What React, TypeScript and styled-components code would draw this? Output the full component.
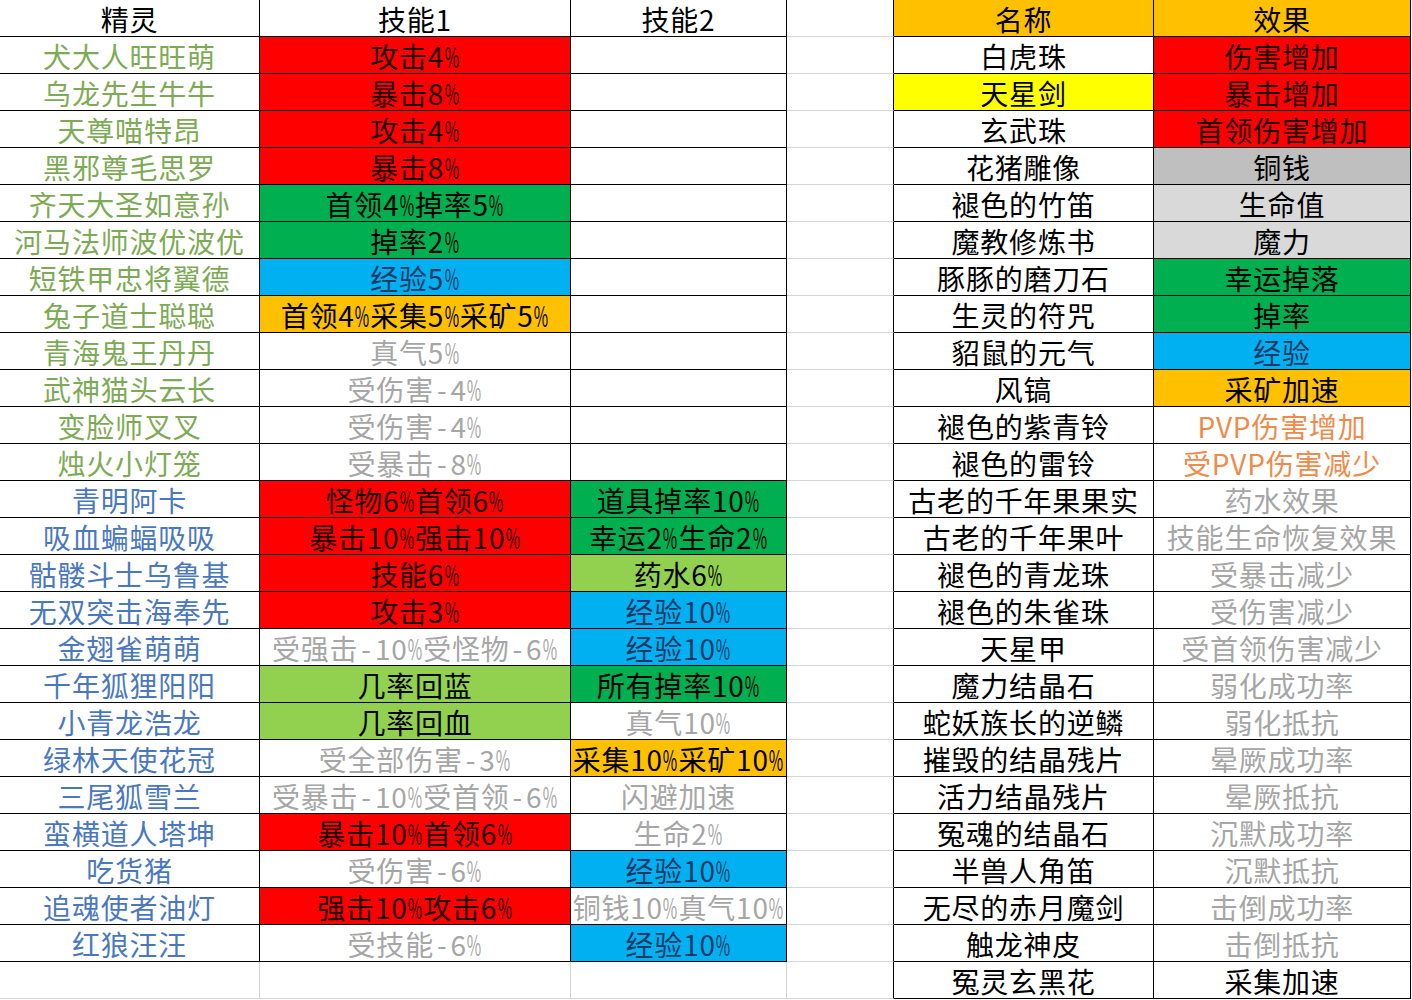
import styled, { createGlobalStyle } from 'styled-components'

const GlobalStyle = createGlobalStyle`
  html, body {
    margin: 0;
    padding: 0;
    background: #fff;
  }
`

const BLACK = '#000'
const GRID = '#d4d4d4'

const RED = '#ff0000'
const GREEN = '#00b050'
const LIME = '#92d050'
const SKY = '#00b0f0'
const AMBER = '#ffc000'
const YELLOW = '#ffff00'
const SILVER = '#bfbfbf'
const PALE = '#d9d9d9'

const DIM = '#a6a6a6'
const LEAF = '#7dab55'
const BLUE = '#4a78c0'
const NAVY = '#1f3864'
const ORANGE = '#f08a4b'

const Sheet = styled.div`
  display: grid;
  grid-template-columns: 260px 311px 216px 107px 260px 257px;
  grid-auto-rows: 37px;
  width: 1411px;
  font-family: 'Noto Sans CJK SC', 'Liberation Sans', sans-serif;
  font-size: 28px;
  letter-spacing: 0.8px;
`

const Cell = styled.div<{ $bg?: string; $color?: string; $right?: string; $bottom?: string }>`
  box-sizing: border-box;
  display: flex;
  align-items: center;
  justify-content: center;
  white-space: nowrap;
  line-height: 36px;
  padding-top: 1px;
  background: ${(p) => p.$bg || '#fff'};
  color: ${(p) => p.$color || '#000'};
  border-right: 1px solid ${(p) => p.$right || BLACK};
  border-bottom: 1px solid ${(p) => p.$bottom || BLACK};
`

/* the sheet's font draws a slim, tall percent sign */
const Pct = styled.span`
  display: inline-block;
  transform: scaleX(0.56);
  margin: 0 -5.5px;
`

const Dash = styled.span`
  margin: 0 3px;
`

const Label = ({ text }: { text?: string }) => {
  if (!text) return null
  return (
    <>
      {text.split(/([%-])/).map((part, i) =>
        part === '%' ? <Pct key={i}>%</Pct> : part === '-' ? <Dash key={i}>-</Dash> : part,
      )}
    </>
  )
}

type Fill = { text?: string; bg?: string; color?: string }

const onColor = (bg?: string) => (bg === SKY ? NAVY : bg === RED ? '#1a0000' : '#000')

const fill = (text: string, bg?: string): Fill => ({ text, bg, color: bg ? onColor(bg) : DIM })

const spirits: [string, string, Fill, Fill][] = [
  ['犬大人旺旺萌', LEAF, fill('攻击4%', RED), {}],
  ['乌龙先生牛牛', LEAF, fill('暴击8%', RED), {}],
  ['天尊喵特昂', LEAF, fill('攻击4%', RED), {}],
  ['黑邪尊毛思罗', LEAF, fill('暴击8%', RED), {}],
  ['齐天大圣如意孙', LEAF, fill('首领4%掉率5%', GREEN), {}],
  ['河马法师波优波优', LEAF, fill('掉率2%', GREEN), {}],
  ['短铁甲忠将翼德', LEAF, fill('经验5%', SKY), {}],
  ['兔子道士聪聪', LEAF, fill('首领4%采集5%采矿5%', AMBER), {}],
  ['青海鬼王丹丹', LEAF, fill('真气5%'), {}],
  ['武神猫头云长', LEAF, fill('受伤害-4%'), {}],
  ['变脸师叉叉', LEAF, fill('受伤害-4%'), {}],
  ['烛火小灯笼', LEAF, fill('受暴击-8%'), {}],
  ['青明阿卡', BLUE, fill('怪物6%首领6%', RED), fill('道具掉率10%', GREEN)],
  ['吸血蝙蝠吸吸', BLUE, fill('暴击10%强击10%', RED), fill('幸运2%生命2%', GREEN)],
  ['骷髅斗士乌鲁基', BLUE, fill('技能6%', RED), fill('药水6%', LIME)],
  ['无双突击海奉先', BLUE, fill('攻击3%', RED), fill('经验10%', SKY)],
  ['金翅雀萌萌', BLUE, fill('受强击-10%受怪物-6%'), fill('经验10%', SKY)],
  ['千年狐狸阳阳', BLUE, fill('几率回蓝', LIME), fill('所有掉率10%', GREEN)],
  ['小青龙浩龙', BLUE, fill('几率回血', LIME), fill('真气10%')],
  ['绿林天使花冠', BLUE, fill('受全部伤害-3%'), fill('采集10%采矿10%', AMBER)],
  ['三尾狐雪兰', BLUE, fill('受暴击-10%受首领-6%'), fill('闪避加速')],
  ['蛮横道人塔坤', BLUE, fill('暴击10%首领6%', RED), fill('生命2%')],
  ['吃货猪', BLUE, fill('受伤害-6%'), fill('经验10%', SKY)],
  ['追魂使者油灯', BLUE, fill('强击10%攻击6%', RED), fill('铜钱10%真气10%')],
  ['红狼汪汪', BLUE, fill('受技能-6%'), fill('经验10%', SKY)],
]

const items: [string, string | undefined, Fill][] = [
  ['白虎珠', undefined, fill('伤害增加', RED)],
  ['天星剑', YELLOW, fill('暴击增加', RED)],
  ['玄武珠', undefined, fill('首领伤害增加', RED)],
  ['花猪雕像', undefined, fill('铜钱', SILVER)],
  ['褪色的竹笛', undefined, fill('生命值', PALE)],
  ['魔教修炼书', undefined, fill('魔力', PALE)],
  ['豚豚的磨刀石', undefined, fill('幸运掉落', GREEN)],
  ['生灵的符咒', undefined, fill('掉率', GREEN)],
  ['貂鼠的元气', undefined, fill('经验', SKY)],
  ['风镐', undefined, fill('采矿加速', AMBER)],
  ['褪色的紫青铃', undefined, { text: 'PVP伤害增加', color: ORANGE }],
  ['褪色的雷铃', undefined, { text: '受PVP伤害减少', color: ORANGE }],
  ['古老的千年果果实', undefined, fill('药水效果')],
  ['古老的千年果叶', undefined, fill('技能生命恢复效果')],
  ['褪色的青龙珠', undefined, fill('受暴击减少')],
  ['褪色的朱雀珠', undefined, fill('受伤害减少')],
  ['天星甲', undefined, fill('受首领伤害减少')],
  ['魔力结晶石', undefined, fill('弱化成功率')],
  ['蛇妖族长的逆鳞', undefined, fill('弱化抵抗')],
  ['摧毁的结晶残片', undefined, fill('晕厥成功率')],
  ['活力结晶残片', undefined, fill('晕厥抵抗')],
  ['冤魂的结晶石', undefined, fill('沉默成功率')],
  ['半兽人角笛', undefined, fill('沉默抵抗')],
  ['无尽的赤月魔剑', undefined, fill('击倒成功率')],
  ['触龙神皮', undefined, fill('击倒抵抗')],
  ['冤灵玄黑花', undefined, { text: '采集加速', color: '#000' }],
]

const Gap = () => <Cell $bottom={GRID} />

const App = () => {
  const rows = []

  rows.push(
    <Cell key="h1">精灵</Cell>,
    <Cell key="h2">技能1</Cell>,
    <Cell key="h3">技能2</Cell>,
    <Gap key="h4" />,
    <Cell key="h5" $bg={AMBER}>名称</Cell>,
    <Cell key="h6" $bg={AMBER}>效果</Cell>,
  )

  for (let i = 0; i < items.length; i++) {
    const spirit = spirits[i]
    const [name, nameBg, effect] = items[i]
    if (spirit) {
      const [who, tint, first, second] = spirit
      rows.push(
        <Cell key={`a${i}`} $color={tint}>{who}</Cell>,
        <Cell key={`b${i}`} $bg={first.bg} $color={first.color}>
          <Label text={first.text} />
        </Cell>,
        <Cell key={`c${i}`} $bg={second.bg} $color={second.color}>
          <Label text={second.text} />
        </Cell>,
      )
    } else {
      rows.push(
        <Cell key={`a${i}`} $right={GRID} $bottom={GRID} />,
        <Cell key={`b${i}`} $right={GRID} $bottom={GRID} />,
        <Cell key={`c${i}`} $right={GRID} $bottom={GRID} />,
      )
    }
    rows.push(
      <Gap key={`d${i}`} />,
      <Cell key={`e${i}`} $bg={nameBg}>{name}</Cell>,
      <Cell key={`f${i}`} $bg={effect.bg} $color={effect.color}>
        <Label text={effect.text} />
      </Cell>,
    )
  }

  return (
    <>
      <GlobalStyle />
      <Sheet>{rows}</Sheet>
    </>
  )
}

export default App
